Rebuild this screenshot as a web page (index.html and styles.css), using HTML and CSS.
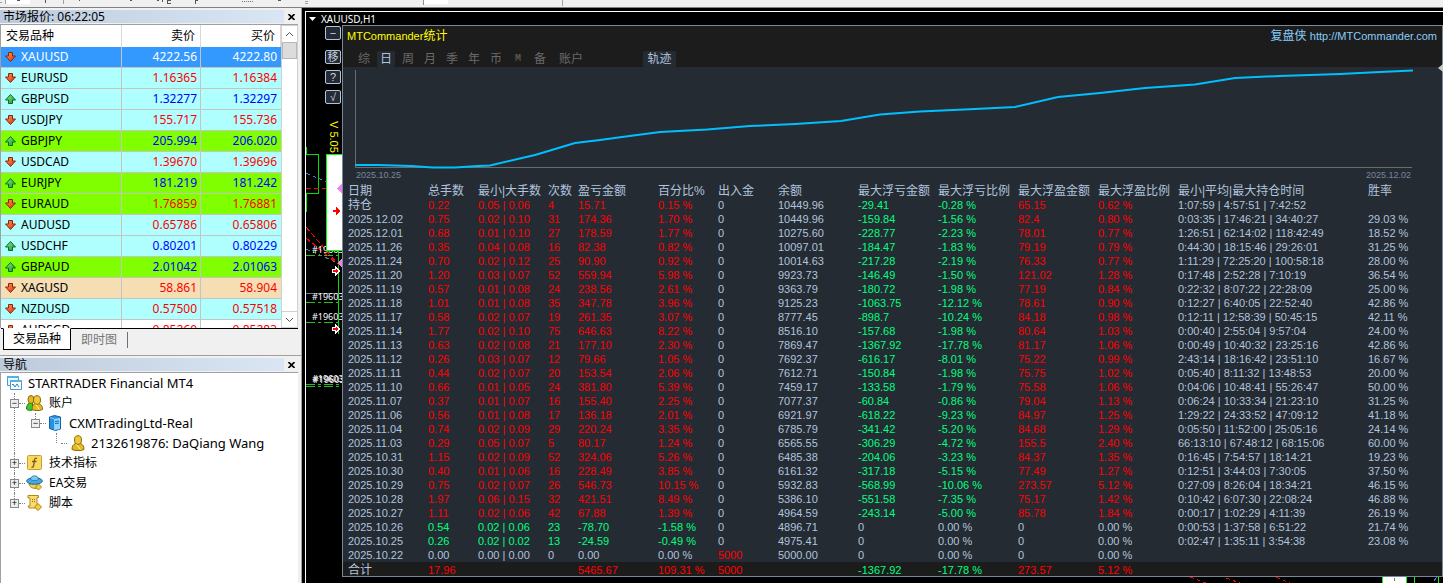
FILE: index.html
```html
<!DOCTYPE html>
<html lang="zh-CN">
<head>
<meta charset="utf-8">
<title>XAUUSD,H1</title>
<link rel="stylesheet" href="styles.css">
</head>
<body>
<svg width="0" height="0" class="defs" aria-hidden="true">
  <linearGradient id="gr" x1="0" y1="0" x2="1" y2="1"><stop offset="0" stop-color="#ff9a60"/><stop offset="1" stop-color="#d83008"/></linearGradient>
  <linearGradient id="gg" x1="0" y1="0" x2="1" y2="1"><stop offset="0" stop-color="#90e890"/><stop offset="1" stop-color="#109830"/></linearGradient>
  <symbol id="down" viewBox="0 0 11 10"><path d="M3.500.500h4v3.500h3L5.500 9.500.500 4h3z" fill="url(#gr)" stroke="#8c2408"/></symbol>
  <symbol id="up" viewBox="0 0 11 10"><path d="M3.500 9.500h4V6h3L5.500.500.500 6h3z" fill="url(#gg)" stroke="#0a6a20"/></symbol>
  <symbol id="person" viewBox="0 0 14 16"><path d="M1 14.500c0-3 1-5 3.500-6h5c2.500 1 3.500 3 3.500 6-3 1.500-9 1.500-12 0z" fill="#e8b820" stroke="#8a6a08"/><ellipse cx="7" cy="5" rx="3.500" ry="4.300" fill="#f0c838" stroke="#8a6a08"/><path d="M5.500 9.500l4 5" stroke="#fff6c0"/></symbol>
  <symbol id="diamond" viewBox="0 0 8 8"><path d="M4 .5L7.500 4 4 7.500.500 4z" fill="#f4cc40" stroke="#a88010"/></symbol>
</svg>

<div class="toolbar">
  <svg width="1000" height="7" viewBox="0 0 1000 7" aria-hidden="true">
    <path d="M0 2.500h2M5.500 0v4M63.500 0v4M305 1.500h3M305 3.500h3M562.500 0v6" stroke="#a0a0a0"/>
    <path d="M6 0h24v4H6zM424 0h24v4h-24z" fill="#fff"/><path d="M423.500 0v5" stroke="#909090"/>
    <path d="M17 0h3v1h-3zM45 0h1v3h-1zM79 0h1v1h-1zM130 0h2v1h-2zM157 0h2v1h-2zM162 0h1v2h-1zM167 0h4v1h-3v2h3v1h-4zM195 0h3v1h-2v3h-1zM278 0h3v1h-3z" fill="#555"/>
    <path d="M242 1.500h12" stroke="#777" stroke-dasharray="1 1"/>
  </svg>
</div>

<div class="work">
<aside class="dock">
  <section class="pane market">
    <header class="cap"><h2>市场报价: 06:22:05</h2><button aria-label="关闭"><svg width="7" height="6" viewBox="0 0 7 6"><path d="M.5 0l6 6M6.500 0l-6 6" stroke="#000" stroke-width="1.600"/></svg></button></header>
    <div class="quotes">
      <div class="list">
      <table>
        <colgroup><col><col class="price"><col class="ask"></colgroup>
        <thead><tr><th>交易品种</th><th>卖价</th><th>买价</th></tr></thead>
        <tbody>
        <tr class="sel"><td><svg><use href="#down"/></svg>XAUUSD</td><td>4222.56</td><td>4222.80</td></tr>
        <tr class="fall"><td><svg><use href="#down"/></svg>EURUSD</td><td>1.16365</td><td>1.16384</td></tr>
        <tr class="rise"><td><svg><use href="#up"/></svg>GBPUSD</td><td>1.32277</td><td>1.32297</td></tr>
        <tr class="fall"><td><svg><use href="#down"/></svg>USDJPY</td><td>155.717</td><td>155.736</td></tr>
        <tr class="rise lime"><td><svg><use href="#up"/></svg>GBPJPY</td><td>205.994</td><td>206.020</td></tr>
        <tr class="fall"><td><svg><use href="#down"/></svg>USDCAD</td><td>1.39670</td><td>1.39696</td></tr>
        <tr class="rise lime"><td><svg><use href="#up"/></svg>EURJPY</td><td>181.219</td><td>181.242</td></tr>
        <tr class="fall lime"><td><svg><use href="#down"/></svg>EURAUD</td><td>1.76859</td><td>1.76881</td></tr>
        <tr class="fall"><td><svg><use href="#down"/></svg>AUDUSD</td><td>0.65786</td><td>0.65806</td></tr>
        <tr class="rise"><td><svg><use href="#up"/></svg>USDCHF</td><td>0.80201</td><td>0.80229</td></tr>
        <tr class="rise lime"><td><svg><use href="#up"/></svg>GBPAUD</td><td>2.01042</td><td>2.01063</td></tr>
        <tr class="fall wheat"><td><svg><use href="#down"/></svg>XAGUSD</td><td>58.861</td><td>58.904</td></tr>
        <tr class="fall"><td><svg><use href="#down"/></svg>NZDUSD</td><td>0.57500</td><td>0.57518</td></tr>
        <tr class="fall plain"><td><svg><use href="#down"/></svg>AUDSGD</td><td>0.85269</td><td>0.85283</td></tr>
        </tbody>
      </table>
      </div>
      <div class="scroll">
        <button aria-label="向上"><svg width="9" height="6" viewBox="0 0 9 6"><path d="M1 5l3.500-3.500L8 5" fill="none" stroke="#555"/></svg></button>
        <div class="thumb"></div>
        <button class="dn" aria-label="向下"><svg width="9" height="6" viewBox="0 0 9 6"><path d="M1 1l3.500 3.500L8 1" fill="none" stroke="#555"/></svg></button>
      </div>
    </div>
    <div class="sheets"><button class="on">交易品种</button><button>即时图</button></div>
  </section>

  <section class="pane nav">
    <header class="cap"><h2>导航</h2><button aria-label="关闭"><svg width="7" height="6" viewBox="0 0 7 6"><path d="M.5 0l6 6M6.500 0l-6 6" stroke="#000" stroke-width="1.600"/></svg></button></header>
    <div class="tree">
      <div class="node"><svg width="15" height="16" viewBox="0 0 15 16"><path d="M.5 1.500h11v9H.500z" fill="#e8f6ff" stroke="#4a9ad0"/><path d="M0 1h12v2H0z" fill="#5ab0e0"/><path d="M3.500 5.500h11v9h-11z" fill="#fff" stroke="#4a9ad0"/><path d="M3 5h12v2H3z" fill="#5ab0e0"/><path d="M5 10l1-1 2 3 2-3 2 3" fill="none" stroke="#3080c0"/></svg>STARTRADER Financial MT4</div>
      <ul>
        <li class="open"><div class="node cjk"><button class="box">−</button><svg width="17" height="16" viewBox="0 0 17 16"><path d="M.5 14c0-3 1-5 3-6h3v7c-2 .500-5 .500-6-1z" fill="#40c830" stroke="#187818"/><ellipse cx="5" cy="4.500" rx="3" ry="4" fill="#e0b828" stroke="#8a6a08"/><path d="M6 14.500c0-3 1-5 3-6h4c2.500 1 3.500 3 3.500 6-3 1.500-8 1.500-10.500 0z" fill="#e8b820" stroke="#8a6a08"/><ellipse cx="11" cy="5" rx="3.500" ry="4.300" fill="#f0c838" stroke="#8a6a08"/><path d="M10 9.500l3 5" stroke="#fff6c0"/></svg>账户</div>
          <ul>
            <li class="last"><div class="node"><button class="box">−</button><svg width="16" height="16" viewBox="0 0 16 16"><path d="M2.500 2l5-1.500 6 1.500v12l-5 1.500-6-2z" fill="#2890e0" stroke="#1060a8"/><path d="M7.500 4l5.500-1v11l-5.500 1z" fill="#90d8ff"/><path d="M8 6.500l4-.5M8 8.500l4-.5" stroke="#1060a8"/><path d="M3 2.500l4.500 1.500v11" fill="none" stroke="#8cf"/></svg>CXMTradingLtd-Real</div>
              <ul><li class="last leaf"><div class="node"><svg width="14" height="16"><use href="#person"/></svg>2132619876: DaQiang Wang</div></li></ul>
            </li>
          </ul>
        </li>
        <li><div class="node cjk"><button class="box">+</button><svg width="17" height="16" viewBox="0 0 17 16"><rect x="1.500" y=".5" width="14" height="14" rx="1" fill="#f8d860" stroke="#c8a030"/><path d="M11 3.500c-2-1-2.500.5-2.500 2L7.500 11c-.3 1-1 1.500-2 1M6 6.500h4.500" fill="none" stroke="#7a5a10" stroke-width="1.300"/></svg>技术指标</div></li>
        <li><div class="node cjk"><button class="box">+</button><svg width="17" height="16" viewBox="0 0 17 16"><path d="M3 9c1 4 5 5 9 4l-1-5z" fill="#f0d060" stroke="#a88010"/><ellipse cx="8.500" cy="6" rx="7.800" ry="3.300" fill="#48a8e0" stroke="#1868a0"/><path d="M4.500 4.500c0-5 8-5 8 0-2 1.500-6 1.500-8 0z" fill="#78c8f0" stroke="#1868a0" stroke-width=".7"/><use href="#diamond" x="9" y="8" width="7" height="8"/></svg>EA交易</div></li>
        <li class="last"><div class="node cjk"><button class="box">+</button><svg width="17" height="16" viewBox="-1 0 17 16"><path d="M1 .5h10.500v2h-1.500v8l2 2.500H2l-1-2h2v-8H1z" fill="#f8dc70" stroke="#b08a18"/><path d="M5 4.500h4M5 6.500h4" stroke="#907018" stroke-dasharray="1 1"/><use href="#diamond" x="7" y="8" width="8" height="8"/></svg>脚本</div></li>
      </ul>
    </div>
  </section>
</aside>

<main class="chart">
  <div class="frame">
  <h1><svg width="7" height="4" viewBox="0 0 7 4"><path d="M0 0h7L3.500 4z" fill="#fff"/></svg>XAUUSD,H1</h1>
  <div class="split">
    <div class="rail">
      <svg class="candles" width="36" height="558" viewBox="306 25 36 558" shape-rendering="crispEdges" aria-hidden="true">
        <g fill="none" stroke="#00e000"><path d="M306.500 147v7M306 154.500h12.500v39H306M306.500 193v19M338.500 250v84"/></g>
        <path d="M306 293.500h37" stroke="#707888"/>
        <path d="M306 255.500h37M306 302.500h37M306 322.500h37M306 384.500h37M306 386.500h37" stroke="#20c020" stroke-dasharray="9 3 3 3"/>
        <path d="M306 173l34 15" stroke="#4878e0" stroke-dasharray="4 3"/>
        <path d="M306 188.500h34M306 227l30 35M306 238l33 27" stroke="#f00" stroke-dasharray="5 3" fill="none"/>
        <path d="M306 249l34 15" stroke="#777" stroke-dasharray="4 3"/>
        <g fill="#fff" font-family="Noto Sans" font-size="9"><text x="312" y="253">#19603</text><text x="312" y="300">#19603</text><text x="312" y="320">#19603</text><text x="312" y="382">#19603</text><text x="313" y="383">#19603</text></g>
        <path d="M326.500 154.500H343v96h-16.500z" fill="#fff" stroke="#00ff00"/>
        <path d="M342 184v9l-5-4.500zM342 258v10l-5-5z" fill="#ee82ee"/>
        <g fill="#f00"><path d="M333 210h3v-3l4 4-4 4v-3h-3z"/><g stroke="#fff"><path d="M332 269.500h3v-3l4.500 4.500-4.500 4.500v-3h-3zM332 327.500h3v-3l4.500 4.500-4.500 4.500v-3h-3z"/></g></g>
      </svg>
      <button class="min">−</button><button>移</button><button>?</button><button>√</button>
      <span class="ver">V 5.05</span>
    </div>
    <section class="panel">
      <header>
        <div class="brand"><strong><span>MTCommander</span>统计</strong><a href="#">复盘侠 <span>http://MTCommander.com</span></a></div>
        <nav><button>综</button><button class="on">日</button><button>周</button><button>月</button><button>季</button><button>年</button><button>币</button><button class="m">M</button><button>备</button><button class="acct">账户</button><button class="on track">轨迹</button></nav>
      </header>
      <div class="plot">
        <svg viewBox="355 70 1058 98" preserveAspectRatio="none" role="img" aria-label="余额曲线">
          <path d="M355.500 70v97.500H1412" fill="none" stroke="#6c6c6c" vector-effect="non-scaling-stroke"/>
          <path d="M355 165h23l33 1 22 1.500h22l23-1.500 12-.5L535 155l40-12 25-3 22-3 38-5 47-2.500 43-3.500 45-2 46-3 39-6.500 40-3 55-2.500 40-2 43-10 42-4 45-5 50-3.500 40-6.500 45-2 60-2 40-2 33-1.500" fill="none" stroke="#00bfff" stroke-width="2" vector-effect="non-scaling-stroke"/>
        </svg>
        <div class="dates"><span>2025.10.25</span><span>2025.12.02</span></div>
      </div>
      <table class="stats">
        <colgroup><col class="w80"><col class="w50"><col class="w70"><col class="w30"><col class="w80"><col class="w60"><col class="w60"><col class="w80"><col class="w80"><col class="w80"><col class="w80"><col class="w80"><col class="w190"><col></colgroup>
        <thead><tr><th>日期<th>总手数<th>最小|大手数<th>次数<th>盈亏金额<th>百分比%<th>出入金<th>余额<th>最大浮亏金额<th>最大浮亏比例<th>最大浮盈金额<th>最大浮盈比例<th>最小|平均|最大持仓时间<th>胜率</tr></thead>
        <tbody>
        <tr><td class="zh">持仓<td>0.22<td>0.05 | 0.06<td>4<td>15.71<td>0.15 %<td>0<td>10449.96<td>-29.41<td>-0.28 %<td>65.15<td>0.62 %<td>1:07:59 | 4:57:51 | 7:42:52<td></tr>
        <tr><td>2025.12.02<td>0.75<td>0.02 | 0.10<td>31<td>174.36<td>1.70 %<td>0<td>10449.96<td>-159.84<td>-1.56 %<td>82.4<td>0.80 %<td>0:03:35 | 17:46:21 | 34:40:27<td>29.03 %</tr>
        <tr><td>2025.12.01<td>0.68<td>0.01 | 0.10<td>27<td>178.59<td>1.77 %<td>0<td>10275.60<td>-228.77<td>-2.23 %<td>78.01<td>0.77 %<td>1:26:51 | 62:14:02 | 118:42:49<td>18.52 %</tr>
        <tr><td>2025.11.26<td>0.35<td>0.04 | 0.08<td>16<td>82.38<td>0.82 %<td>0<td>10097.01<td>-184.47<td>-1.83 %<td>79.19<td>0.79 %<td>0:44:30 | 18:15:46 | 29:26:01<td>31.25 %</tr>
        <tr><td>2025.11.24<td>0.70<td>0.02 | 0.12<td>25<td>90.90<td>0.92 %<td>0<td>10014.63<td>-217.28<td>-2.19 %<td>76.33<td>0.77 %<td>1:11:29 | 72:25:20 | 100:58:18<td>28.00 %</tr>
        <tr><td>2025.11.20<td>1.20<td>0.03 | 0.07<td>52<td>559.94<td>5.98 %<td>0<td>9923.73<td>-146.49<td>-1.50 %<td>121.02<td>1.28 %<td>0:17:48 | 2:52:28 | 7:10:19<td>36.54 %</tr>
        <tr><td>2025.11.19<td>0.57<td>0.01 | 0.08<td>24<td>238.56<td>2.61 %<td>0<td>9363.79<td>-180.72<td>-1.98 %<td>77.19<td>0.84 %<td>0:22:32 | 8:07:22 | 22:28:09<td>25.00 %</tr>
        <tr><td>2025.11.18<td>1.01<td>0.01 | 0.08<td>35<td>347.78<td>3.96 %<td>0<td>9125.23<td>-1063.75<td>-12.12 %<td>78.61<td>0.90 %<td>0:12:27 | 6:40:05 | 22:52:40<td>42.86 %</tr>
        <tr><td>2025.11.17<td>0.58<td>0.02 | 0.07<td>19<td>261.35<td>3.07 %<td>0<td>8777.45<td>-898.7<td>-10.24 %<td>84.18<td>0.98 %<td>0:12:11 | 12:58:39 | 50:45:15<td>42.11 %</tr>
        <tr><td>2025.11.14<td>1.77<td>0.02 | 0.10<td>75<td>646.63<td>8.22 %<td>0<td>8516.10<td>-157.68<td>-1.98 %<td>80.64<td>1.03 %<td>0:00:40 | 2:55:04 | 9:57:04<td>24.00 %</tr>
        <tr><td>2025.11.13<td>0.63<td>0.02 | 0.08<td>21<td>177.10<td>2.30 %<td>0<td>7869.47<td>-1367.92<td>-17.78 %<td>81.17<td>1.06 %<td>0:00:49 | 10:40:32 | 23:25:16<td>42.86 %</tr>
        <tr><td>2025.11.12<td>0.26<td>0.03 | 0.07<td>12<td>79.66<td>1.05 %<td>0<td>7692.37<td>-616.17<td>-8.01 %<td>75.22<td>0.99 %<td>2:43:14 | 18:16:42 | 23:51:10<td>16.67 %</tr>
        <tr><td>2025.11.11<td>0.44<td>0.02 | 0.07<td>20<td>153.54<td>2.06 %<td>0<td>7612.71<td>-150.84<td>-1.98 %<td>75.75<td>1.02 %<td>0:05:40 | 8:11:32 | 13:48:53<td>20.00 %</tr>
        <tr><td>2025.11.10<td>0.66<td>0.01 | 0.05<td>24<td>381.80<td>5.39 %<td>0<td>7459.17<td>-133.58<td>-1.79 %<td>75.58<td>1.06 %<td>0:04:06 | 10:48:41 | 55:26:47<td>50.00 %</tr>
        <tr><td>2025.11.07<td>0.37<td>0.01 | 0.07<td>16<td>155.40<td>2.25 %<td>0<td>7077.37<td>-60.84<td>-0.86 %<td>79.04<td>1.13 %<td>0:06:24 | 10:33:34 | 21:23:10<td>31.25 %</tr>
        <tr><td>2025.11.06<td>0.56<td>0.01 | 0.08<td>17<td>136.18<td>2.01 %<td>0<td>6921.97<td>-618.22<td>-9.23 %<td>84.97<td>1.25 %<td>1:29:22 | 24:33:52 | 47:09:12<td>41.18 %</tr>
        <tr><td>2025.11.04<td>0.74<td>0.02 | 0.09<td>29<td>220.24<td>3.35 %<td>0<td>6785.79<td>-341.42<td>-5.20 %<td>84.68<td>1.29 %<td>0:05:50 | 11:52:00 | 25:05:16<td>24.14 %</tr>
        <tr><td>2025.11.03<td>0.29<td>0.05 | 0.07<td>5<td>80.17<td>1.24 %<td>0<td>6565.55<td>-306.29<td>-4.72 %<td>155.5<td>2.40 %<td>66:13:10 | 67:48:12 | 68:15:06<td>60.00 %</tr>
        <tr><td>2025.10.31<td>1.15<td>0.02 | 0.09<td>52<td>324.06<td>5.26 %<td>0<td>6485.38<td>-204.06<td>-3.23 %<td>84.37<td>1.35 %<td>0:16:45 | 7:54:57 | 18:14:21<td>19.23 %</tr>
        <tr><td>2025.10.30<td>0.40<td>0.01 | 0.06<td>16<td>228.49<td>3.85 %<td>0<td>6161.32<td>-317.18<td>-5.15 %<td>77.49<td>1.27 %<td>0:12:51 | 3:44:03 | 7:30:05<td>37.50 %</tr>
        <tr><td>2025.10.29<td>0.75<td>0.02 | 0.07<td>26<td>546.73<td>10.15 %<td>0<td>5932.83<td>-568.99<td>-10.06 %<td>273.57<td>5.12 %<td>0:27:09 | 8:26:04 | 18:34:21<td>46.15 %</tr>
        <tr><td>2025.10.28<td>1.97<td>0.06 | 0.15<td>32<td>421.51<td>8.49 %<td>0<td>5386.10<td>-551.58<td>-7.35 %<td>75.17<td>1.42 %<td>0:10:42 | 6:07:30 | 22:08:24<td>46.88 %</tr>
        <tr><td>2025.10.27<td>1.11<td>0.02 | 0.06<td>42<td>67.88<td>1.39 %<td>0<td>4964.59<td>-243.14<td>-5.00 %<td>85.78<td>1.84 %<td>0:00:17 | 1:02:29 | 4:11:39<td>26.19 %</tr>
        <tr class="loss"><td>2025.10.26<td>0.54<td>0.02 | 0.06<td>23<td>-78.70<td>-1.58 %<td>0<td>4896.71<td>0<td>0.00 %<td>0<td>0.00 %<td>0:00:53 | 1:37:58 | 6:51:22<td>21.74 %</tr>
        <tr class="loss"><td>2025.10.25<td>0.26<td>0.02 | 0.02<td>13<td>-24.59<td>-0.49 %<td>0<td>4975.41<td>0<td>0.00 %<td>0<td>0.00 %<td>0:02:47 | 1:35:11 | 3:54:38<td>23.08 %</tr>
        <tr class="flat"><td>2025.10.22<td>0.00<td>0.00 | 0.00<td>0<td>0.00<td>0.00 %<td class="cash">5000<td>5000.00<td>0<td>0.00 %<td>0<td>0.00 %<td><td></tr>
        </tbody>
        <tfoot><tr><td class="zh">合计<td>17.96<td><td><td>5465.67<td>109.31 %<td class="cash">5000<td><td>-1367.92<td>-17.78 %<td>273.57<td>5.12 %<td><td></tr></tfoot>
      </table>
      <svg class="knob" width="5" height="8" viewBox="0 0 5 8"><path d="M5 0v8L0 4z" fill="#c8c8c8"/></svg>
    </section>
  </div>
  <svg class="under" width="253" height="6" viewBox="1190 577 253 6" shape-rendering="crispEdges" aria-hidden="true">
    <path d="M1190 577l16 6M1226 578l14 5M1276 577l14 6" stroke="#f00" stroke-dasharray="4 3"/><path d="M1382.500 577v6h24v-6z" fill="#fff"/><path d="M1382.500 577v6M1406.500 577v6M1414.500 577v6M1438.500 577v6" stroke="#0f0"/><path d="M1394.500 578v3" stroke="#777"/><path d="M1434 581l3-4" stroke="#4878e0"/>
  </svg>
  </div>
</main>
</div>
</body>
</html>
```
FILE: styles.css
```css
* { box-sizing: border-box; }
body {
  margin: 0; height: 100vh; display: flex; flex-direction: column; overflow: hidden;
  background: #f0f0f0; color: #000;
  font: 12px/16px "Noto Sans", "Noto Sans CJK SC", sans-serif;
}
button { font: inherit; color: inherit; background: none; border: 0; padding: 0; margin: 0; }
h1, h2 { margin: 0; font-size: inherit; font-weight: normal; }
ul { list-style: none; margin: 0; padding: 0; }
.defs { position: absolute; }
.toolbar { height: 8px; flex: none; border-bottom: 1px solid #808080; overflow: hidden; }
.toolbar svg { display: block; }
.work { flex: 1; display: flex; min-height: 0; }

/* docked panes */
.dock { width: 302px; flex: none; display: flex; flex-direction: column; border-right: 1px solid #a0a0a0; }
.pane { display: flex; flex-direction: column; padding: 2px 3px 0 0; }
.market { height: 347px; }
.nav { flex: 1; border-top: 1px solid #a0a0a0; }
.cap { height: 13px; flex: none; display: flex; margin-bottom: 1px; }
.cap h2 { flex: 1; padding-left: 3px; line-height: 13px; background: linear-gradient(90deg, #bccbdc, #dae6f4); }
.cap button { width: 14px; display: flex; align-items: center; justify-content: center; }

.quotes { flex: 1; min-height: 0; display: flex; border: 1px solid #a0a0a0; border-width: 1px 0 0 1px; background: #fff; }
.list { flex: 1; overflow: hidden; }
.list table { width: 100%; table-layout: fixed; border-collapse: separate; border-spacing: 0; }
.price { width: 79px; }
.ask { width: 80px; }
.list th { height: 22px; padding: 0 5px; font-weight: normal; text-align: right; border-right: 1px solid #d8d8d8; }
.list th:first-child { text-align: left; }
.list td { height: 21px; padding: 0 3px; text-align: right; line-height: 20px; border: solid #c4c4c4; border-width: 0 1px 1px 0; background: #afffff; }
.list td:first-child { text-align: left; padding-left: 4px; }
.list td:last-child { padding-right: 4px; border-right: 0; }
.list svg { width: 11px; height: 10px; margin-right: 5px; vertical-align: -1px; }
.fall td + td { color: #f00; }
.rise td + td { color: #00f; }
.list .sel td { background: #39f; color: #fff; }
.list .lime td { background: #7fff00; }
.list .wheat td { background: #f5deb3; }
.list .plain td { background: #fff; }

.scroll { width: 17px; flex: none; display: flex; flex-direction: column; background: #fff; border: 1px solid #d0d0d0; }
.scroll button { height: 16px; display: flex; align-items: center; justify-content: center; }
.thumb { height: 17px; background: #dcdcdc; border: 1px solid #b8b8b8; }
.dn { margin-top: auto; border-top: 1px solid #d0d0d0; }

.sheets { height: 27px; flex: none; display: flex; align-items: flex-start; margin: 0 0 0 1px; border-top: 1px solid #000; padding-left: 2px; }
.sheets button { height: 16px; margin-top: 3px; padding: 0 10px; border-right: 1px solid #707070; color: #777; line-height: 14px; }
.sheets .on { height: 22px; margin-top: -1px; padding: 0 9px; border: 1px solid #000; border-top-color: #fff; background: #fff; color: #000; }

.tree { flex: 1; background: #fff; border: 1px solid #a0a0a0; border-width: 1px 0 0 1px; padding-left: 6px; }
.node { height: 20px; display: flex; align-items: center; gap: 6px; white-space: nowrap; font-size: 13px; }
.cjk { font-size: 12px; }
.node svg { flex: none; }
.tree > ul { padding-left: 3px; }
.tree li { position: relative; }
.tree li ul { padding-left: 21px; }
.tree li::before { content: ""; position: absolute; left: 4px; top: 0; bottom: 0; border-left: 1px dotted #808080; }
.tree li.last::before { bottom: auto; height: 10px; }
.tree li::after { content: ""; position: absolute; left: 9px; top: 10px; width: 6px; border-top: 1px dotted #808080; }
.box { position: relative; z-index: 1; width: 9px; height: 9px; margin-right: 1px; border: 1px solid #888; background: #eee; font: 9px/6px "Liberation Sans", sans-serif; flex: none; }
.leaf .node { padding-left: 19px; }

/* chart window */
.chart { flex: 1; min-width: 0; background: #000; padding: 3px 0 0 3px; position: relative; overflow: hidden; }
.frame { border: 1px solid #fff; border-width: 1px 0 0 1px; height: 100%; position: relative; }
.chart h1 { height: 13px; display: flex; align-items: center; gap: 5px; padding: 1px 0 0 3px; color: #fff; font: 10px/12px "Noto Sans", sans-serif; }
.split { display: flex; }
.rail { width: 36px; flex: none; position: relative; display: flex; flex-direction: column; align-items: flex-end; padding: 1px 1px 0 0; gap: 6px; }
.candles { position: absolute; left: 0; top: 0; }
.rail button { position: relative; width: 16px; height: 14px; border: 1px solid #b0c4de; border-radius: 2px; background: #252b33; color: #ccd4e0; font: 11px/12px "Liberation Sans", "Noto Sans CJK SC", sans-serif; }
.rail .min { margin-bottom: 4px; }
.ver { position: relative; writing-mode: vertical-rl; margin-top: 11px; color: #ff0; font: 11px/14px "Liberation Sans", sans-serif; }

.panel { flex: 1; min-width: 0; position: relative; border: 1px solid #778899; background: #252b33; color: #b0c4de; font: 11px/14px "Liberation Sans", "Noto Sans CJK SC", sans-serif; }
.panel header { height: 41px; background: #1c1c1c; }
.brand { display: flex; justify-content: space-between; padding: 3px 5px 0 4px; font-size: 12px; }
.brand span { font-size: 11px; }
.brand strong { font-weight: normal; color: #ff0; }
.brand a { color: #87cefa; text-decoration: none; }
.panel nav { display: flex; padding: 8px 0 0 10px; }
.panel nav button { width: 18px; height: 16px; margin: 0 2px; border-radius: 2px; color: #6a6a6a; font-size: 12px; line-height: 16px; }
.panel nav .on { background: #252b33; color: #b0c4de; }
.panel nav .m { font: bold 10px/16px "Liberation Mono", monospace; color: #5c544c; }
.panel nav .acct { width: 36px; }
.panel nav .track { width: 33px; margin-left: 52px; }
.plot { padding: 3px 29px 0 12px; }
.plot svg { display: block; width: 100%; height: 98px; overflow: visible; }
.dates { display: flex; justify-content: space-between; height: 15px; padding: 0 2px 0 1px; color: #778899; font-size: 9px; line-height: 14px; }

.stats { width: calc(100% - 5px); margin-left: 5px; table-layout: fixed; border-collapse: collapse; }
.stats th, .stats td { padding: 0; text-align: left; font-weight: normal; white-space: nowrap; height: 14px; line-height: 14px; }
.stats th { height: 15px; padding-top: 2px; line-height: 13px; font-size: 12px; }
.stats .zh { font-size: 12px; }
.w30 { width: 30px; } .w50 { width: 50px; } .w60 { width: 60px; } .w70 { width: 70px; } .w80 { width: 80px; } .w190 { width: 190px; }
.stats td:nth-child(n+2):nth-child(-n+6), .stats td:nth-child(11), .stats td:nth-child(12) { color: #f00; }
.stats td:nth-child(9), .stats td:nth-child(10) { color: #00ff7f; }
.stats .loss td:nth-child(n+2):nth-child(-n+6) { color: #00ff7f; }
.stats .loss td:nth-child(n+9):nth-child(-n+12), .stats .flat td:nth-child(n) { color: #b0c4de; }
.stats .cash, .stats .flat td.cash:nth-child(n) { color: #f00; }
.stats tfoot tr { background: #1c1c1c; box-shadow: -5px 0 #1c1c1c; }
.stats tfoot td { padding-top: 2px; line-height: 12px; }
.knob { position: absolute; right: -1px; top: 38px; }
.under { position: absolute; right: 0; top: 565px; }
```
